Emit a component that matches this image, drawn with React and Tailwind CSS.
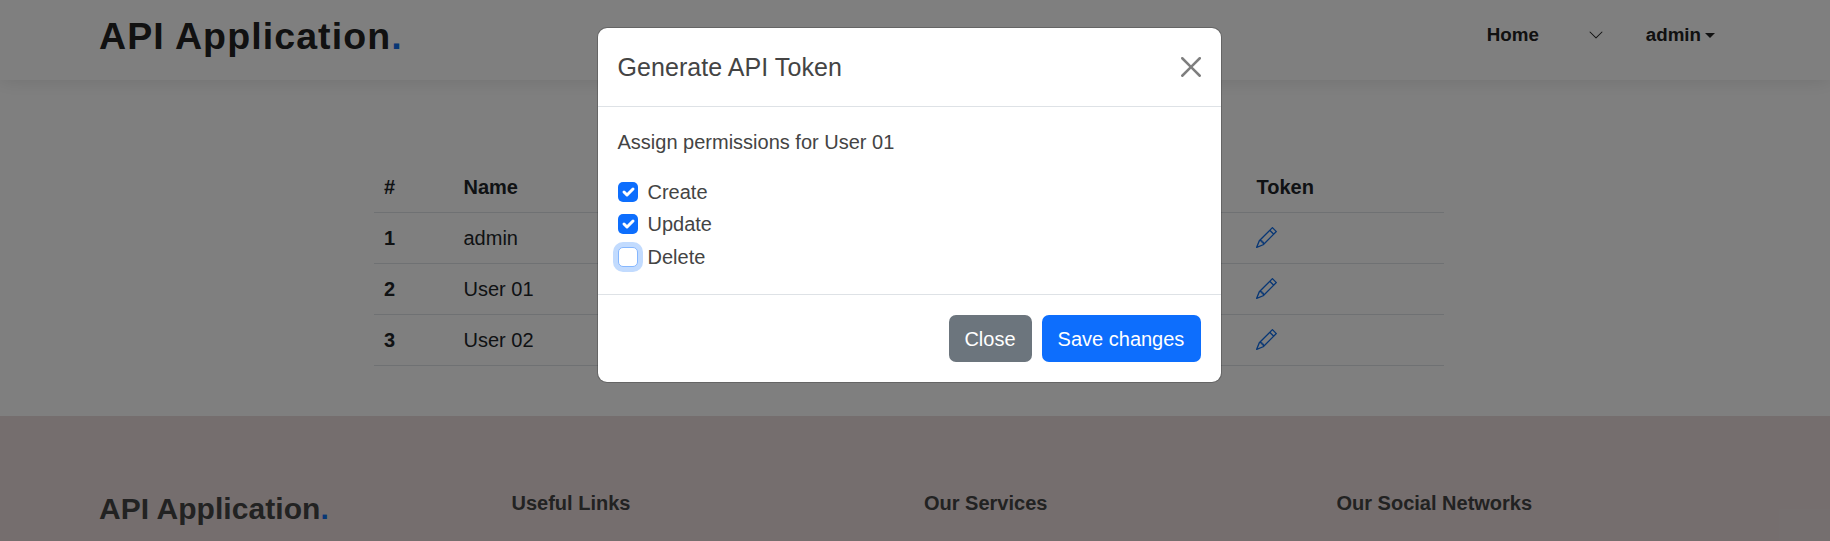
const users = ["admin", "User 01", "User 02"];

function Pencil() {
  return (
    <svg className="block size-[21px] text-[#106eea]" viewBox="0 0 16 16" fill="currentColor">
      <path d="M12.146.146a.5.5 0 0 1 .708 0l3 3a.5.5 0 0 1 0 .708l-10 10a.5.5 0 0 1-.168.11l-5 2a.5.5 0 0 1-.65-.65l2-5a.5.5 0 0 1 .11-.168zM11.207 2.5 13.5 4.793 14.793 3.5 12.5 1.207zm1.586 3L10.5 3.207 4 9.707V10h.5a.5.5 0 0 1 .5.5v.5h.5a.5.5 0 0 1 .5.5v.5h.293zm-9.761 5.175-.106.106-1.528 3.821 3.821-1.528.106-.106A.5.5 0 0 1 5 12.5V12h-.5a.5.5 0 0 1-.5-.5V11h-.5a.5.5 0 0 1-.468-.325" />
    </svg>
  );
}

function Header() {
  return (
    <header className="relative z-10 flex h-20 justify-between bg-white pl-[99px] pr-[115px] shadow-[0_0_19px_rgba(0,0,0,0.12)]">
      <h1 className="mt-[14px] text-[37.5px] leading-[45px] font-bold tracking-[1.1px] text-[#222]">
        API Application<span className="text-[#106eea]">.</span>
      </h1>
      <nav className="mt-5 flex h-[30px] items-center text-[18.75px] leading-[30px] font-bold text-[#222]">
        <a className="w-[101px]">Home</a>
        <svg className="mr-[42px] size-4" viewBox="0 0 16 16" fill="currentColor">
          <path fillRule="evenodd" d="M1.646 4.646a.5.5 0 0 1 .708 0L8 10.293l5.646-5.647a.5.5 0 0 1 .708.708l-6 6a.5.5 0 0 1-.708 0l-6-6a.5.5 0 0 1 0-.708" />
        </svg>
        <a>admin</a>
        <span className="ml-1 mt-[1px] border-x-[5px] border-t-[5px] border-x-transparent border-t-[#222]" />
      </nav>
    </header>
  );
}

function UserTable() {
  return (
    <div className="ml-[374px] mt-[82px] w-[1070px] text-xl leading-[30px] text-[#212529]">
      <div className="grid h-[51px] grid-cols-[79.5px_793px_1fr] border-b border-[#dee2e6] px-[10px] pt-[10px] font-bold">
        <span>#</span>
        <span>Name</span>
        <span>Token</span>
      </div>
      {users.map((name, i) => (
        <div key={name} className="grid h-[51px] grid-cols-[79.5px_792.5px_1fr] border-b border-[#dee2e6] px-[10px] pt-[10px]">
          <span className="font-bold">{i + 1}</span>
          <span>{name}</span>
          <span className="pt-[4px]"><Pencil /></span>
        </div>
      ))}
    </div>
  );
}

function Footer() {
  return (
    <footer className="mt-[50px] grid h-[125px] grid-cols-[412.5px_412.5px_412.5px_1fr] bg-[#eadddd] pl-[99px] font-bold text-[#444]">
      <h3 className="mt-[75px] text-[30px] leading-[36px] tracking-[0.06px]">
        API Application<span className="text-[#106eea]">.</span>
      </h3>
      <h4 className="mt-[75px] text-xl leading-6">Useful Links</h4>
      <h4 className="mt-[75px] text-xl leading-6">Our Services</h4>
      <h4 className="mt-[75px] text-xl leading-6">Our Social Networks</h4>
    </footer>
  );
}

function Check({ label, checked }) {
  return (
    <label className="flex items-start gap-[9.5px] leading-[30px]">
      {checked ? (
        <svg className="mt-[5px] size-5 rounded-[5px] bg-[#0d6efd]" viewBox="0 0 20 20">
          <path fill="none" stroke="#fff" strokeLinecap="round" strokeLinejoin="round" strokeWidth="3" d="m6 10 3 3 6-6" />
        </svg>
      ) : (
        <span className="mt-[5px] size-5 rounded-[5px] border border-[#86b7fe] bg-white shadow-[0_0_0_5px_rgba(13,110,253,0.25)]" />
      )}
      <span>{label}</span>
    </label>
  );
}

function Modal() {
  return (
    <div className="absolute inset-0 z-20 bg-black/50">
      <section className="ml-[597px] mt-[27px] flex h-[356px] w-[625px] flex-col rounded-[10px] border border-black/20 bg-white bg-clip-padding text-xl text-[#444]">
        <header className="flex h-[79px] items-center justify-between border-b border-[#dee2e6] px-5">
          <h2 className="-ml-[0.5px] text-[25px] leading-[38px] tracking-[0.06px]">Generate API Token</h2>
          <svg className="size-5 opacity-50" viewBox="0 0 16 16" fill="#000">
            <path d="M.293.293a1 1 0 0 1 1.414 0L8 6.586 14.293.293a1 1 0 1 1 1.414 1.414L9.414 8l6.293 6.293a1 1 0 0 1-1.414 1.414L8 9.414l-6.293 6.293a1 1 0 0 1-1.414-1.414L6.586 8 .293 1.707a1 1 0 0 1 0-1.414" />
          </svg>
        </header>
        <div className="h-[187px] px-5 pt-5">
          <p className="-ml-[0.5px] mb-5 leading-[30px]">Assign permissions for User 01</p>
          <div className="grid grid-rows-[32px_33px_32px]">
            <Check label="Create" checked />
            <Check label="Update" checked />
            <Check label="Delete" />
          </div>
        </div>
        <footer className="flex h-[88px] items-center justify-end gap-[10px] border-t border-[#dee2e6] px-5 text-white">
          <button className="h-[47px] w-[83px] rounded-[7px] bg-[#6c757d] pr-px">Close</button>
          <button className="h-[47px] w-[159px] rounded-[7px] bg-[#0d6efd] pr-px">Save changes</button>
        </footer>
      </section>
    </div>
  );
}

export default function App() {
  return (
    <div className="relative h-[541px] w-[1830px] overflow-hidden bg-white font-['Liberation_Sans',Arial,sans-serif]">
      <Header />
      <UserTable />
      <Footer />
      <Modal />
    </div>
  );
}
